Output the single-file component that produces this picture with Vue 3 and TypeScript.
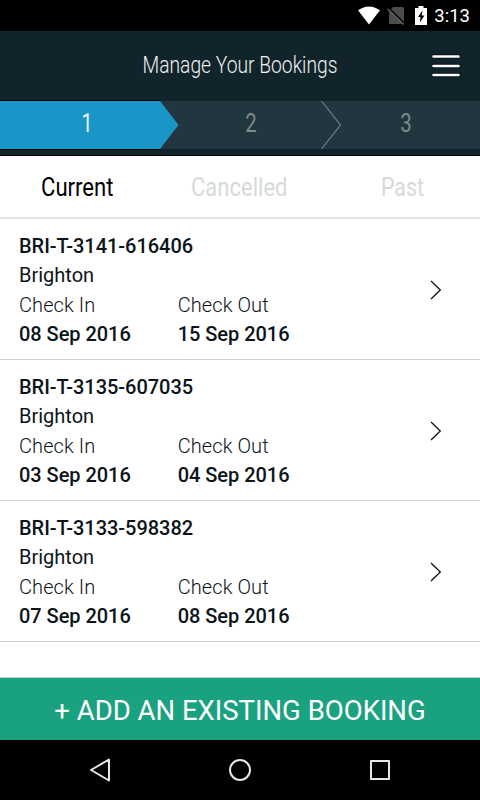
<script setup lang="ts">
interface Booking {
  reference: string
  city: string
  checkIn: string
  checkOut: string
}

const bookings: Booking[] = [
  { reference: 'BRI-T-3141-616406', city: 'Brighton', checkIn: '08 Sep 2016', checkOut: '15 Sep 2016' },
  { reference: 'BRI-T-3135-607035', city: 'Brighton', checkIn: '03 Sep 2016', checkOut: '04 Sep 2016' },
  { reference: 'BRI-T-3133-598382', city: 'Brighton', checkIn: '07 Sep 2016', checkOut: '08 Sep 2016' },
]
</script>

<template>
  <div class="screen">
    <div class="status">
      <svg class="status-icons" width="74" height="31" viewBox="0 0 74 31">
        <path d="M0 10.300Q11 2.700 22 10.300L11 24.500Z" fill="#fff" />
        <path d="M35 7h9.500q1.500 0 1.500 1.500V24H32.500q-1.500 0-1.500-1.500V11Z" fill="#4b4b4b" />
        <path d="M30.500 7.500L47 24" stroke="#000" stroke-width="1.500" />
        <path d="M29.500 8.700L45.500 24.500" stroke="#5a5a5a" stroke-width="1.500" />
        <path d="M60.500 6h5v2H69v17H57V8h3.500Z" fill="#fff" />
        <path d="M64.500 10.500L60 17h2.500l-.7 5.500L66.500 15.500h-2.800Z" fill="#000" />
      </svg>
      <span class="clock">3:13</span>
    </div>

    <header class="header">
      <svg class="title" width="300" height="40" viewBox="0 0 300 40">
        <text x="22.500" y="28" textLength="195" lengthAdjust="spacingAndGlyphs">Manage Your Bookings</text>
      </svg>
      <svg class="menu" width="30" height="26" viewBox="0 0 30 26">
        <path d="M2.500 3.500H27.500M2.500 13H27.500M2.500 22H27.500" stroke="#000" stroke-width="4.500" stroke-linecap="round" opacity=".5" />
        <path d="M2.500 3.500H27.500M2.500 13H27.500M2.500 22H27.500" stroke="#fff" stroke-width="2.600" stroke-linecap="round" />
      </svg>
    </header>

    <svg class="steps" width="480" height="48" viewBox="0 0 480 48">
      <path d="M0 0H160L178.500 24L160 48H0Z" fill="#1a95c8" />
      <path d="M0 -.5H160M0 48.500H160" stroke="#000" stroke-width="1" />
      <path d="M321.500 0L340.500 24L321.500 48" fill="none" stroke="#74838a" stroke-width="1.200" />
      <text class="step active" x="81.500" y="31" textLength="11" lengthAdjust="spacingAndGlyphs">1</text>
      <text class="step" x="245.200" y="31" textLength="11.500" lengthAdjust="spacingAndGlyphs">2</text>
      <text class="step" x="400.200" y="31" textLength="11.500" lengthAdjust="spacingAndGlyphs">3</text>
    </svg>
    <div class="steps-foot"></div>

    <svg class="tabs" width="480" height="61" viewBox="0 0 480 61">
      <text class="tab current" x="41" y="40" textLength="72.500" lengthAdjust="spacingAndGlyphs">Current</text>
      <text class="tab" x="191" y="40" textLength="96.500" lengthAdjust="spacingAndGlyphs">Cancelled</text>
      <text class="tab" x="381" y="40" textLength="43" lengthAdjust="spacingAndGlyphs">Past</text>
    </svg>

    <main class="list">
      <article v-for="b in bookings" :key="b.reference" class="booking">
        <div class="details">
          <div class="reference">{{ b.reference }}</div>
          <div class="city">{{ b.city }}</div>
          <div class="dates">
            <div><div class="label">Check In</div><div class="date">{{ b.checkIn }}</div></div>
            <div><div class="label">Check Out</div><div class="date">{{ b.checkOut }}</div></div>
          </div>
        </div>
        <svg class="chevron" width="12" height="22" viewBox="0 0 12 22">
          <path d="M1 2L10.300 11L1 20" fill="none" stroke="#111" stroke-width="1.300" />
        </svg>
      </article>
    </main>

    <button class="add">+ ADD AN EXISTING BOOKING</button>

    <nav class="nav">
      <svg width="480" height="60" viewBox="0 0 480 60">
        <g fill="none" stroke="#e6e6e6" stroke-width="2" stroke-linejoin="round">
          <path d="M91 30L109 19.500V40.500Z" />
          <circle cx="240" cy="30" r="10" />
          <rect x="371" y="21" width="18" height="18" />
        </g>
      </svg>
    </nav>
  </div>
</template>

<style>
body {
  background: #fff;
}
</style>

<style scoped>
.screen {
  display: flex;
  flex-direction: column;
  width: 480px;
  height: 800px;
  overflow: hidden;
  background: #fff;
  color: #0c1419;
  font-family: Roboto, sans-serif;
}
svg {
  display: block;
  flex: none;
}
.status {
  display: flex;
  justify-content: space-between;
  flex: none;
  height: 31px;
  padding: 0 10px 0 358px;
  background: #000;
}
.clock {
  color: #fff;
  font-size: 18.5px;
  font-weight: 450;
  line-height: 33px;
}
.header {
  display: flex;
  flex: none;
  align-items: flex-start;
  height: 70px;
  padding: 14px 19px 0 120px;
  box-sizing: border-box;
  justify-content: space-between;
  background: #12242b;
}
.title {
  overflow: visible;
  fill: #f0f0f0;
  font-size: 24.5px;
  font-weight: 350;
}
.menu {
  margin-top: 8px;
}
.steps {
  position: relative;
  overflow: visible;
  background: #223640;
}
.step {
  fill: #7b898b;
  font-size: 26px;
  font-weight: 400;
}
.step.active {
  fill: #e9f6fc;
}
.steps-foot {
  flex: none;
  height: 7px;
  box-sizing: border-box;
  border-bottom: 1px solid #000;
  background: #12242b;
}
.tabs {
  border-bottom: 2px solid #dfe4e4;
}
.tab {
  fill: #d6dada;
  font-size: 26px;
  font-weight: 450;
}
.tab.current {
  fill: #000;
}
.list {
  flex: 1;
}
.booking {
  display: flex;
  align-items: center;
  justify-content: space-between;
  height: 141.1px;
  box-sizing: border-box;
  padding: 0 38px 0 19px;
  border-bottom: 1px solid #cdd3d3;
}
.details {
  padding-top: 3.2px;
  font-size: 20px;
  line-height: 29.4px;
}
.reference,
.date {
  font-weight: 500;
  letter-spacing: -0.04px;
}
.label {
  font-weight: 300;
  letter-spacing: 0.08px;
}
.dates {
  display: grid;
  grid-template-columns: 158.7px auto;
}
.chevron {
  margin-top: 1px;
}
.add {
  height: 63px;
  flex: none;
  border: 0;
  border-top: 1px solid #b9cbc6;
  padding: 3px 0 0;
  background: #1aa280;
  color: #fff;
  font: 400 27.5px Roboto, sans-serif;
}
.nav {
  flex: none;
  height: 60px;
  background: #000;
}
</style>
